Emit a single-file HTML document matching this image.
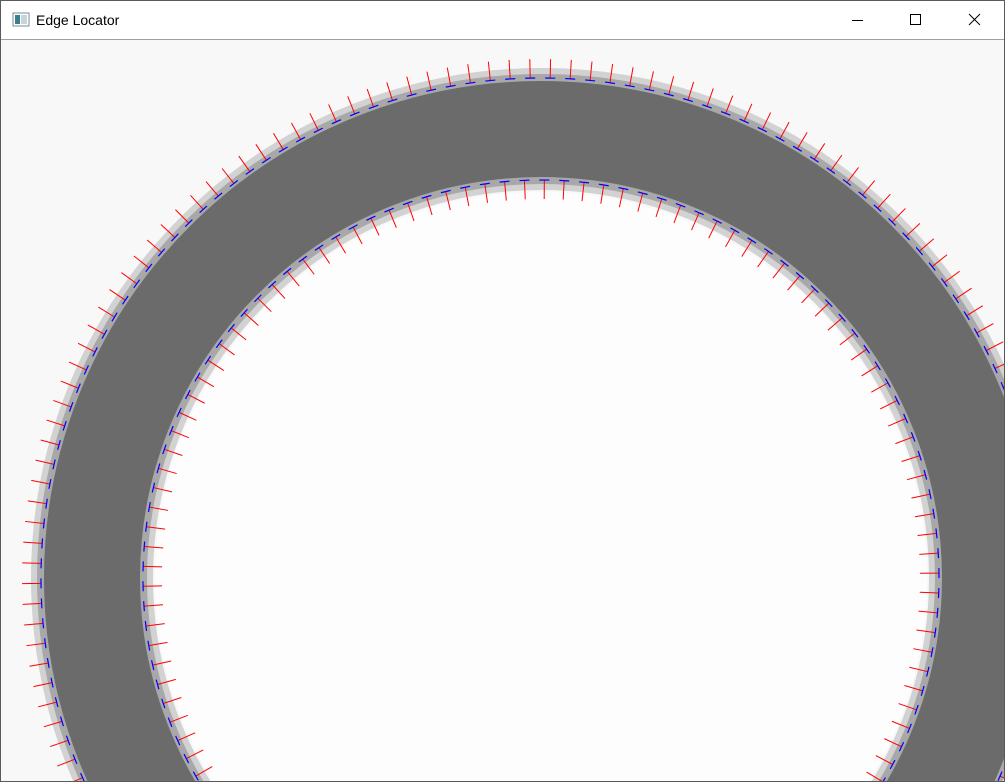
<!DOCTYPE html>
<html><head><meta charset="utf-8"><style>
html,body{margin:0;padding:0;width:1005px;height:782px;overflow:hidden;background:#fff;font-family:"Liberation Sans",sans-serif}
.win{position:absolute;left:0;top:0;width:1003px;height:780px;border:1px solid #5a5a5a;background:#fff;overflow:hidden}
.title{position:absolute;left:0;top:0;width:1003px;height:38px;background:#fff}
.title span{position:absolute;left:35px;top:11px;font-size:14px;color:#000}
.canvas{position:absolute;left:0;top:38px;width:1003px;height:741px;border-top:1px solid #a0a0a0;overflow:hidden;background:#f8f8f8}
</style></head><body>
<div class="win">
<div class="title">
<svg width="20" height="20" style="position:absolute;left:11px;top:10px"><rect x="1" y="2" width="16" height="13" fill="#fff" stroke="#7a8a9a"/><rect x="3" y="4" width="5" height="9" fill="#3a7f8a"/><rect x="9" y="4" width="6" height="9" fill="#c8d4dc"/></svg>
<span>Edge Locator</span>
<svg width="1003" height="38" style="position:absolute;left:0;top:0">
<line x1="851" y1="19.5" x2="862" y2="19.5" stroke="#000"/>
<rect x="909.5" y="13.5" width="10" height="10" fill="none" stroke="#000"/>
<line x1="968" y1="13" x2="979" y2="24" stroke="#000"/><line x1="979" y1="13" x2="968" y2="24" stroke="#000"/>
</svg>
</div>
<div class="canvas">
<svg id="s" width="1003" height="741" viewBox="1 40 1003 741" style="display:block">
<circle cx="541" cy="578" r="449" fill="none" stroke="#d2d2d2" stroke-width="122"/>
<circle cx="541" cy="578" r="449" fill="none" stroke="#a8a8a8" stroke-width="110"/>
<circle cx="541" cy="578" r="449" fill="none" stroke="#6b6b6b" stroke-width="96"/>
<circle cx="541" cy="578" r="386" fill="#fdfdfd"/>
<g id="t"></g>
</svg>
</div>
</div>
<script>
var g=document.getElementById('t'),cx=541,cy=578,h='';
function ticks(R,step,dir){
 for(var a=-Math.PI*1.5;a<=Math.PI*0.5;a+=step){
  var c=Math.cos(a),s=Math.sin(a);
  var x=cx+R*c,y=cy+R*s;
  var x2=cx+(R+dir*19)*c,y2=cy+(R+dir*19)*s;
  h+='<line x1="'+x+'" y1="'+y+'" x2="'+x2+'" y2="'+y2+'" stroke="#f00" stroke-width="1"/>';
  var tx=-s*5,ty=c*5;
  h+='<line x1="'+(x-tx)+'" y1="'+(y-ty)+'" x2="'+(x+tx)+'" y2="'+(y+ty)+'" stroke="#00f" stroke-width="1.2"/>';
 }
}
ticks(500,0.04,1);
ticks(398,0.05,-1);
g.innerHTML=h;
</script>
</body></html>
